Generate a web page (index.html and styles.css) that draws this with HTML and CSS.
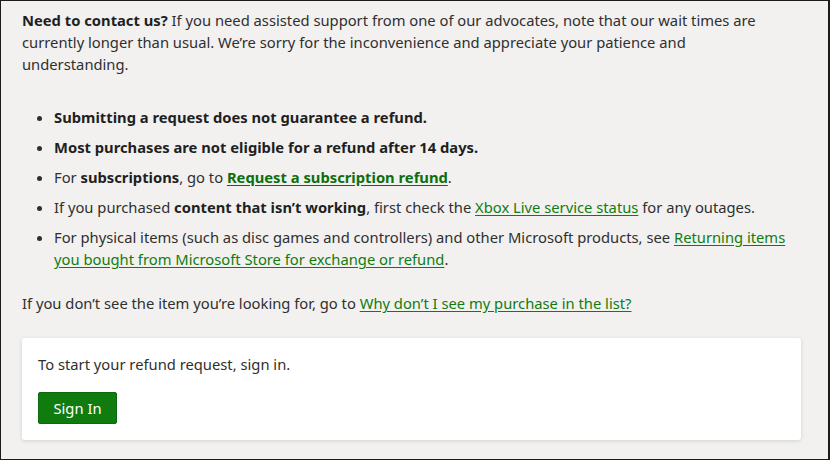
FILE: index.html
```html
<!DOCTYPE html>
<html lang="en">
<head>
<meta charset="UTF-8" />
<meta name="viewport" content="width=device-width, initial-scale=1.0" />
<title>Request a refund</title>
<link rel="stylesheet" href="styles.css">
</head>
<body>
  <main class="page">
    <p class="notice"><strong>Need to contact us?</strong> If you need assisted support from one of our advocates, note that our wait times are currently longer than usual. We’re sorry for the inconvenience and appreciate your patience and understanding.</p>

    <ul class="rules">
      <li><strong>Submitting a request does not guarantee a refund.</strong></li>
      <li><strong>Most purchases are not eligible for a refund after 14 days.</strong></li>
      <li>For <strong>subscriptions</strong>, go to <a href="#" class="strong-link">Request a subscription refund</a>.</li>
      <li>If you purchased <strong>content that isn’t working</strong>, first check the <a href="#">Xbox Live service status</a> for any outages.</li>
      <li>For physical items (such as disc games and controllers) and other Microsoft products, see <a href="#">Returning items you bought from Microsoft Store for exchange or refund</a>.</li>
    </ul>

    <p class="missing">If you don’t see the item you’re looking for, go to <a href="#">Why don’t I see my purchase in the list?</a></p>

    <section class="card">
      <p>To start your refund request, sign in.</p>
      <button type="button" class="signin">Sign In</button>
    </section>
  </main>
</body>
</html>
```
FILE: styles.css
```css
html {
  margin: 0;
  padding: 0;
  box-sizing: border-box;
}

*, *::before, *::after {
  box-sizing: inherit;
}

body {
  margin: 0;
  width: 830px;
  height: 460px;
  font-family: "Noto Sans", "Open Sans", Arial, sans-serif;
  font-size: 14.75px;
  line-height: 22px;
  color: #2f2f2f;
  background-color: #f2f1f0;
}

.page {
  height: 460px;
  border: 1px solid #1c1c1c;
  border-right-width: 2px;
  padding: 8px 28px 0 21px;
}

p {
  margin: 0;
}

.notice {
  max-width: 765px;
}

strong {
  font-weight: 700;
  color: #1f1f1f;
}

a {
  color: #107c10;
  text-decoration: underline;
  text-underline-offset: 2px;
}

a.strong-link {
  font-weight: 700;
  color: #0e6e0e;
}

.rules {
  margin: 31px 0 0;
  padding-left: 32px;
}

.rules li {
  margin-bottom: 8px;
}

.missing {
  margin-top: 22px;
}

.card {
  margin-top: 24px;
  margin-right: -1px;
  background-color: #fff;
  border-radius: 3px;
  box-shadow: 0 1px 4px rgba(0, 0, 0, 0.13);
  padding: 15px 16px 16px 16px;
}

.signin {
  margin-top: 17px;
  width: 79px;
  height: 32px;
  border: 1px solid #0b6a0b;
  border-radius: 2px;
  background-color: #107c10;
  color: #fff;
  font-family: inherit;
  font-size: 14.75px;
  cursor: pointer;
}

.signin:hover {
  background-color: #0b6a0b;
}
```
